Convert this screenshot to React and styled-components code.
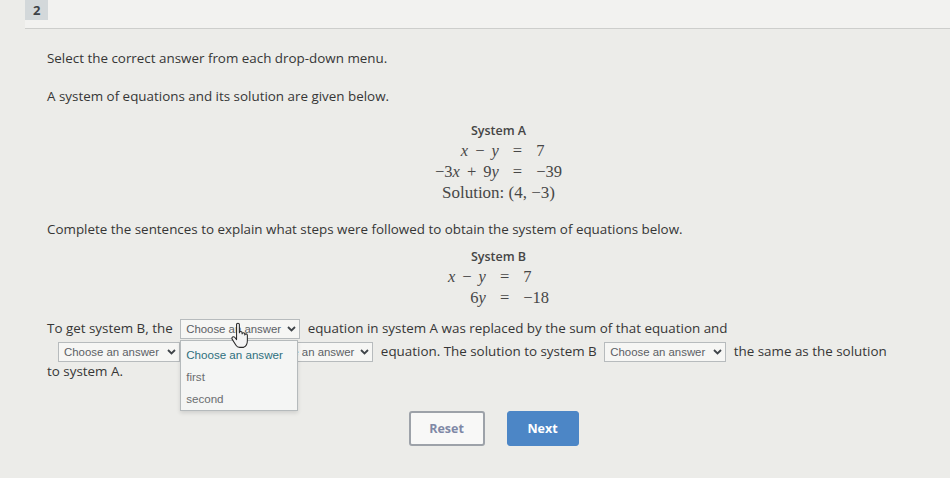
import React from "react";
import styled, { createGlobalStyle } from "styled-components";

const Global = createGlobalStyle`
  html, body { margin: 0; padding: 0; }
  body {
    background: #ecece9;
    font-family: "Open Sans", "Liberation Sans", sans-serif;
    color: #3a3a3a;
  }
`;

const Page = styled.div`
  width: 950px;
  min-height: 478px;
  background: #ecece9;
`;

const Header = styled.div`
  margin-left: 25px;
  height: 28px;
  background: #f2f2f0;
  border-bottom: 1px solid #cdcecc;
  display: flex;
  align-items: flex-start;
`;

const Num = styled.div`
  width: 23px;
  height: 20px;
  background: #d3d8da;
  box-sizing: border-box;
  padding-left: 8px;
  font-size: 13px;
  font-weight: 700;
  line-height: 20px;
  color: #3d4246;
`;

const Content = styled.div`
  padding-left: 47px;
`;

const Text = styled.p`
  margin: ${(p) => p.$top}px 0 0;
  font-size: 13.4px;
  line-height: 18px;
  color: #363636;
`;

const SystemBlock = styled.div`
  margin-top: ${(p) => p.$top}px;
  display: flex;
  flex-direction: column;
  align-items: center;
`;

const SystemLabel = styled.div`
  font-size: 12.5px;
  font-weight: 600;
  line-height: 18px;
  color: #454545;
`;

const EqGrid = styled.div`
  display: grid;
  grid-template-columns: auto auto auto;
  column-gap: 14px;
  font-family: "Liberation Serif", "DejaVu Serif", serif;
  font-size: 16.5px;
  line-height: 21px;
  color: #474747;
`;

const Lhs = styled.span`
  text-align: right;
  white-space: nowrap;
`;

const Rhs = styled.span`
  text-align: left;
  white-space: nowrap;
`;

const Op = styled.span`
  margin: 0 7px;
`;

const Solution = styled.div`
  grid-column: 1 / -1;
  text-align: center;
  white-space: nowrap;
  font-size: 17px;
`;

const Sentence = styled.div`
  margin-top: 9px;
  font-size: 13.4px;
  color: #363636;
`;

const Line = styled.div`
  height: ${(p) => p.$h}px;
  line-height: ${(p) => p.$h}px;
  padding-left: ${(p) => p.$indent || 0}px;
  white-space: nowrap;
`;

const SelectWrap = styled.span`
  position: relative;
  display: inline-block;
  vertical-align: middle;
  margin: 0 4px;
`;

const SelectBox = styled.span`
  display: flex;
  align-items: center;
  justify-content: space-between;
  box-sizing: border-box;
  width: ${(p) => p.$w}px;
  height: 20px;
  padding: 0 3px 0 5px;
  background: #f6f6f4;
  border: 1px solid #b7bbbd;
  font-family: "Liberation Sans", Arial, sans-serif;
  font-size: 11.4px;
  line-height: 18px;
  color: #5b6064;
`;

const Menu = styled.div`
  position: absolute;
  left: 0;
  top: 21px;
  width: 118px;
  height: 71px;
  box-sizing: border-box;
  padding-top: 3px;
  background: #f4f5f4;
  border: 1px solid #b5babc;
  box-shadow: 0 2px 4px rgba(0, 0, 0, 0.12);
  z-index: 2;
`;

const Option = styled.div`
  height: 22px;
  line-height: 22px;
  padding-left: 5px;
  font-family: "Liberation Sans", Arial, sans-serif;
  font-size: 11.6px;
  color: ${(p) => (p.$active ? "#2f6f7d" : "#6a6d70")};
`;

const Cursor = styled.svg`
  position: absolute;
  left: 49px;
  top: 3px;
  z-index: 3;
`;

const Buttons = styled.div`
  margin-top: 32px;
  display: flex;
  justify-content: center;
  gap: 22px;
  padding-right: 10px;
`;

const Button = styled.button`
  width: ${(p) => p.$w}px;
  height: 35px;
  border-radius: 3px;
  font-family: "Open Sans", sans-serif;
  font-size: 12.5px;
  font-weight: 700;
  cursor: pointer;
  background: ${(p) => (p.$primary ? "#4c86c6" : "#f8f8f7")};
  color: ${(p) => (p.$primary ? "#ffffff" : "#7f88a6")};
  border: ${(p) => (p.$primary ? "1px solid #4c86c6" : "2px solid #9da2a9")};
`;

const Chevron = () => (
  <svg width="9" height="6" viewBox="0 0 9 6">
    <polyline points="1,1 4.5,4.5 8,1" fill="none" stroke="#3f4449" strokeWidth="1.8" />
  </svg>
);

const Select = ({ w = 121, open }) => (
  <SelectWrap>
    <SelectBox $w={w}>
      Choose an answer
      <Chevron />
    </SelectBox>
    {open && (
      <>
        <Menu>
          <Option $active>Choose an answer</Option>
          <Option>first</Option>
          <Option>second</Option>
        </Menu>
        <Cursor width="21" height="27" viewBox="0 0 17 23">
          <path
            d="M6 2.2Q6 1 7.2 1Q8.4 1 8.4 2.2L8.4 9.2Q8.4 8.1 9.6 8.1Q10.7 8.1 10.7 9.2L10.7 10.1Q10.8 9.1 11.9 9.1Q13 9.1 13 10.2L13 11Q13.1 10.1 14.1 10.1Q15.2 10.1 15.2 11.3L15.2 16Q15.2 20.2 12 21.6L8.6 21.6Q6.6 21.6 5.5 19.8L2.2 14.6Q1.6 13.4 2.6 12.8Q3.7 12.2 4.6 13.2L6 15Z"
            fill="#f4f4f4"
            stroke="#2a2a2a"
            strokeWidth="0.9"
            strokeLinejoin="round"
          />
        </Cursor>
      </>
    )}
  </SelectWrap>
);

const V = ({ children }) => <i>{children}</i>;

export default function App() {
  return (
    <Page>
      <Global />
      <Header>
        <Num>2</Num>
      </Header>
      <Content>
        <Text $top={20}>Select the correct answer from each drop-down menu.</Text>
        <Text $top={20}>A system of equations and its solution are given below.</Text>

        <SystemBlock $top={17}>
          <SystemLabel>System A</SystemLabel>
          <EqGrid>
            <Lhs>
              <V>x</V>
              <Op>−</Op>
              <V>y</V>
            </Lhs>
            <span>=</span>
            <Rhs>7</Rhs>
            <Lhs>
              −3<V>x</V>
              <Op>+</Op>9<V>y</V>
            </Lhs>
            <span>=</span>
            <Rhs>−39</Rhs>
            <Solution>Solution: (4, −3)</Solution>
          </EqGrid>
        </SystemBlock>

        <Text $top={17}>
          Complete the sentences to explain what steps were followed to obtain the system of equations below.
        </Text>

        <SystemBlock $top={10}>
          <SystemLabel>System B</SystemLabel>
          <EqGrid>
            <Lhs>
              <V>x</V>
              <Op>−</Op>
              <V>y</V>
            </Lhs>
            <span>=</span>
            <Rhs>7</Rhs>
            <Lhs>
              6<V>y</V>
            </Lhs>
            <span>=</span>
            <Rhs>−18</Rhs>
          </EqGrid>
        </SystemBlock>

        <Sentence>
          <Line $h={22}>
            To get system B, the <Select w={120} open /> equation in system A was replaced by the sum of that
            equation and
          </Line>
          <Line $h={24} $indent={7}>
            <Select w={122} /> times the <Select w={120} /> equation. The solution to system B{" "}
            <Select w={122} /> the same as the solution
          </Line>
          <Line $h={16}>to system A.</Line>
        </Sentence>

        <Buttons>
          <Button $w={76}>Reset</Button>
          <Button $w={72} $primary>
            Next
          </Button>
        </Buttons>
      </Content>
    </Page>
  );
}
